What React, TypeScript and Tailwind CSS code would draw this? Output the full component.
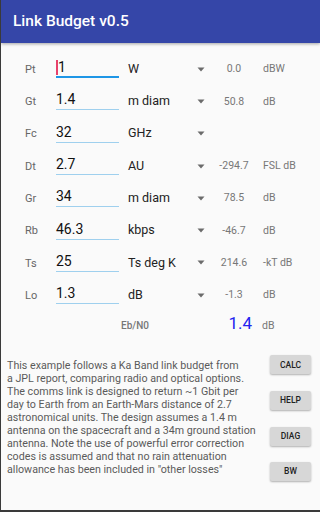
import React from "react";

type Row = {
  label: string;
  value: string;
  unit: string;
  result?: string;
  resultUnit?: string;
  focused?: boolean;
};

const rows: Row[] = [
  { label: "Pt", value: "1", unit: "W", result: "0.0", resultUnit: "dBW", focused: true },
  { label: "Gt", value: "1.4", unit: "m diam", result: "50.8", resultUnit: "dB" },
  { label: "Fc", value: "32", unit: "GHz" },
  { label: "Dt", value: "2.7", unit: "AU", result: "-294.7", resultUnit: "FSL dB" },
  { label: "Gr", value: "34", unit: "m diam", result: "78.5", resultUnit: "dB" },
  { label: "Rb", value: "46.3", unit: "kbps", result: "-46.7", resultUnit: "dB" },
  { label: "Ts", value: "25", unit: "Ts deg K", result: "214.6", resultUnit: "-kT dB" },
  { label: "Lo", value: "1.3", unit: "dB", result: "-1.3", resultUnit: "dB" },
];

const buttons = ["CALC", "HELP", "DIAG", "BW"];

// line breaks as in the app's text view
const notes = [
  "This example follows a Ka Band link budget from",
  "a JPL report, comparing radio and optical options.",
  "The comms link is designed to return ~1 Gbit per",
  "day to Earth from an Earth-Mars distance of 2.7",
  "astronomical units. The design assumes a 1.4 m",
  "antenna on the spacecraft and a 34m ground station",
  "antenna. Note the use of powerful error correction",
  "codes is assumed and that no rain attenuation",
  'allowance has been included in "other losses"',
];

function Caret() {
  return (
    <svg width="8" height="5" viewBox="0 0 8 5" className="block">
      <path d="M0.5 0.5 L7.5 0.5 L4 4.5 Z" fill="#6b6b6b" />
    </svg>
  );
}

function InputRow({ row }: { row: Row }) {
  return (
    <div className="flex items-center h-[32.3px]">
      <div className="w-[55px] pl-[24px] text-[11px] text-[#666]">{row.label}</div>
      <div
        className={
          "w-[63px] h-[17px] flex items-center text-[14px] text-[#111] -mt-[1px] " +
          (row.focused ? "border-b-[2px] border-[#1e96e6]" : "border-b border-[#9fd0ee]")
        }
      >
        {row.focused && <span className="w-[1.5px] h-[15px] bg-[#e8416b] mr-[0.5px] -mt-[2px]" />}
        <span className="-mt-[3px]">{row.value}</span>
      </div>
      <div className="w-[78px] pl-[9px] text-[12.5px] text-[#222] whitespace-nowrap -mt-[2px]">
        {row.unit}
      </div>
      <div className="w-[8px] -mt-[2px]">
        <Caret />
      </div>
      <div className="w-[58px] text-center text-[10.5px] text-[#777] -mt-[2px]">
        {row.result ?? ""}
      </div>
      <div className="text-[10.5px] text-[#777] -mt-[2px] whitespace-nowrap">
        {row.resultUnit ?? ""}
      </div>
    </div>
  );
}

export default function App() {
  return (
    <div
      className="w-[320px] h-[512px] bg-[#fafafa] border-l border-[#3a3a3a] flex flex-col overflow-hidden"
      style={{ fontFamily: "Roboto, 'Liberation Sans', sans-serif" }}
    >
      <div className="h-[43px] bg-[#3546a8] flex items-center pl-[12px] shadow-[0_1px_3px_rgba(0,0,0,0.35)] shrink-0">
        <span className="text-white text-[15.5px] font-medium">Link Budget v0.5</span>
      </div>

      <div className="flex flex-col pt-[11px]">
        {rows.map((r) => (
          <InputRow key={r.label} row={r} />
        ))}
        <div className="flex items-center h-[26px]">
          <div className="w-[120px]" />
          <div className="w-[86px] text-[10px] text-[#777] font-medium">Eb/N0</div>
          <div className="w-[45px] text-right text-[17px] text-[#2323f0] -mt-[3px]">1.4</div>
          <div className="pl-[10px] text-[10.5px] text-[#777]">dB</div>
        </div>
      </div>

      <div className="flex flex-1 pt-[22px]">
        <p className="w-[260px] shrink-0 pl-[6px] text-[10.7px] leading-[12.9px] text-[#5a5a5a]">
          {notes.map((l, i) => (
            <span key={i} className="block whitespace-nowrap">
              {l}
            </span>
          ))}
        </p>
        <div className="flex flex-col gap-[16.6px] pl-[9px] -mt-[5px]">
          {buttons.map((b) => (
            <button
              key={b}
              className="w-[41px] h-[19px] rounded-[2px] bg-[#d7d7d7] text-[8.5px] font-medium text-[#222] shadow-[0_1px_2px_rgba(0,0,0,0.3)]"
            >
              {b}
            </button>
          ))}
        </div>
      </div>
      <div className="h-[2px] bg-[#3a3a3a] shrink-0" />
    </div>
  );
}
